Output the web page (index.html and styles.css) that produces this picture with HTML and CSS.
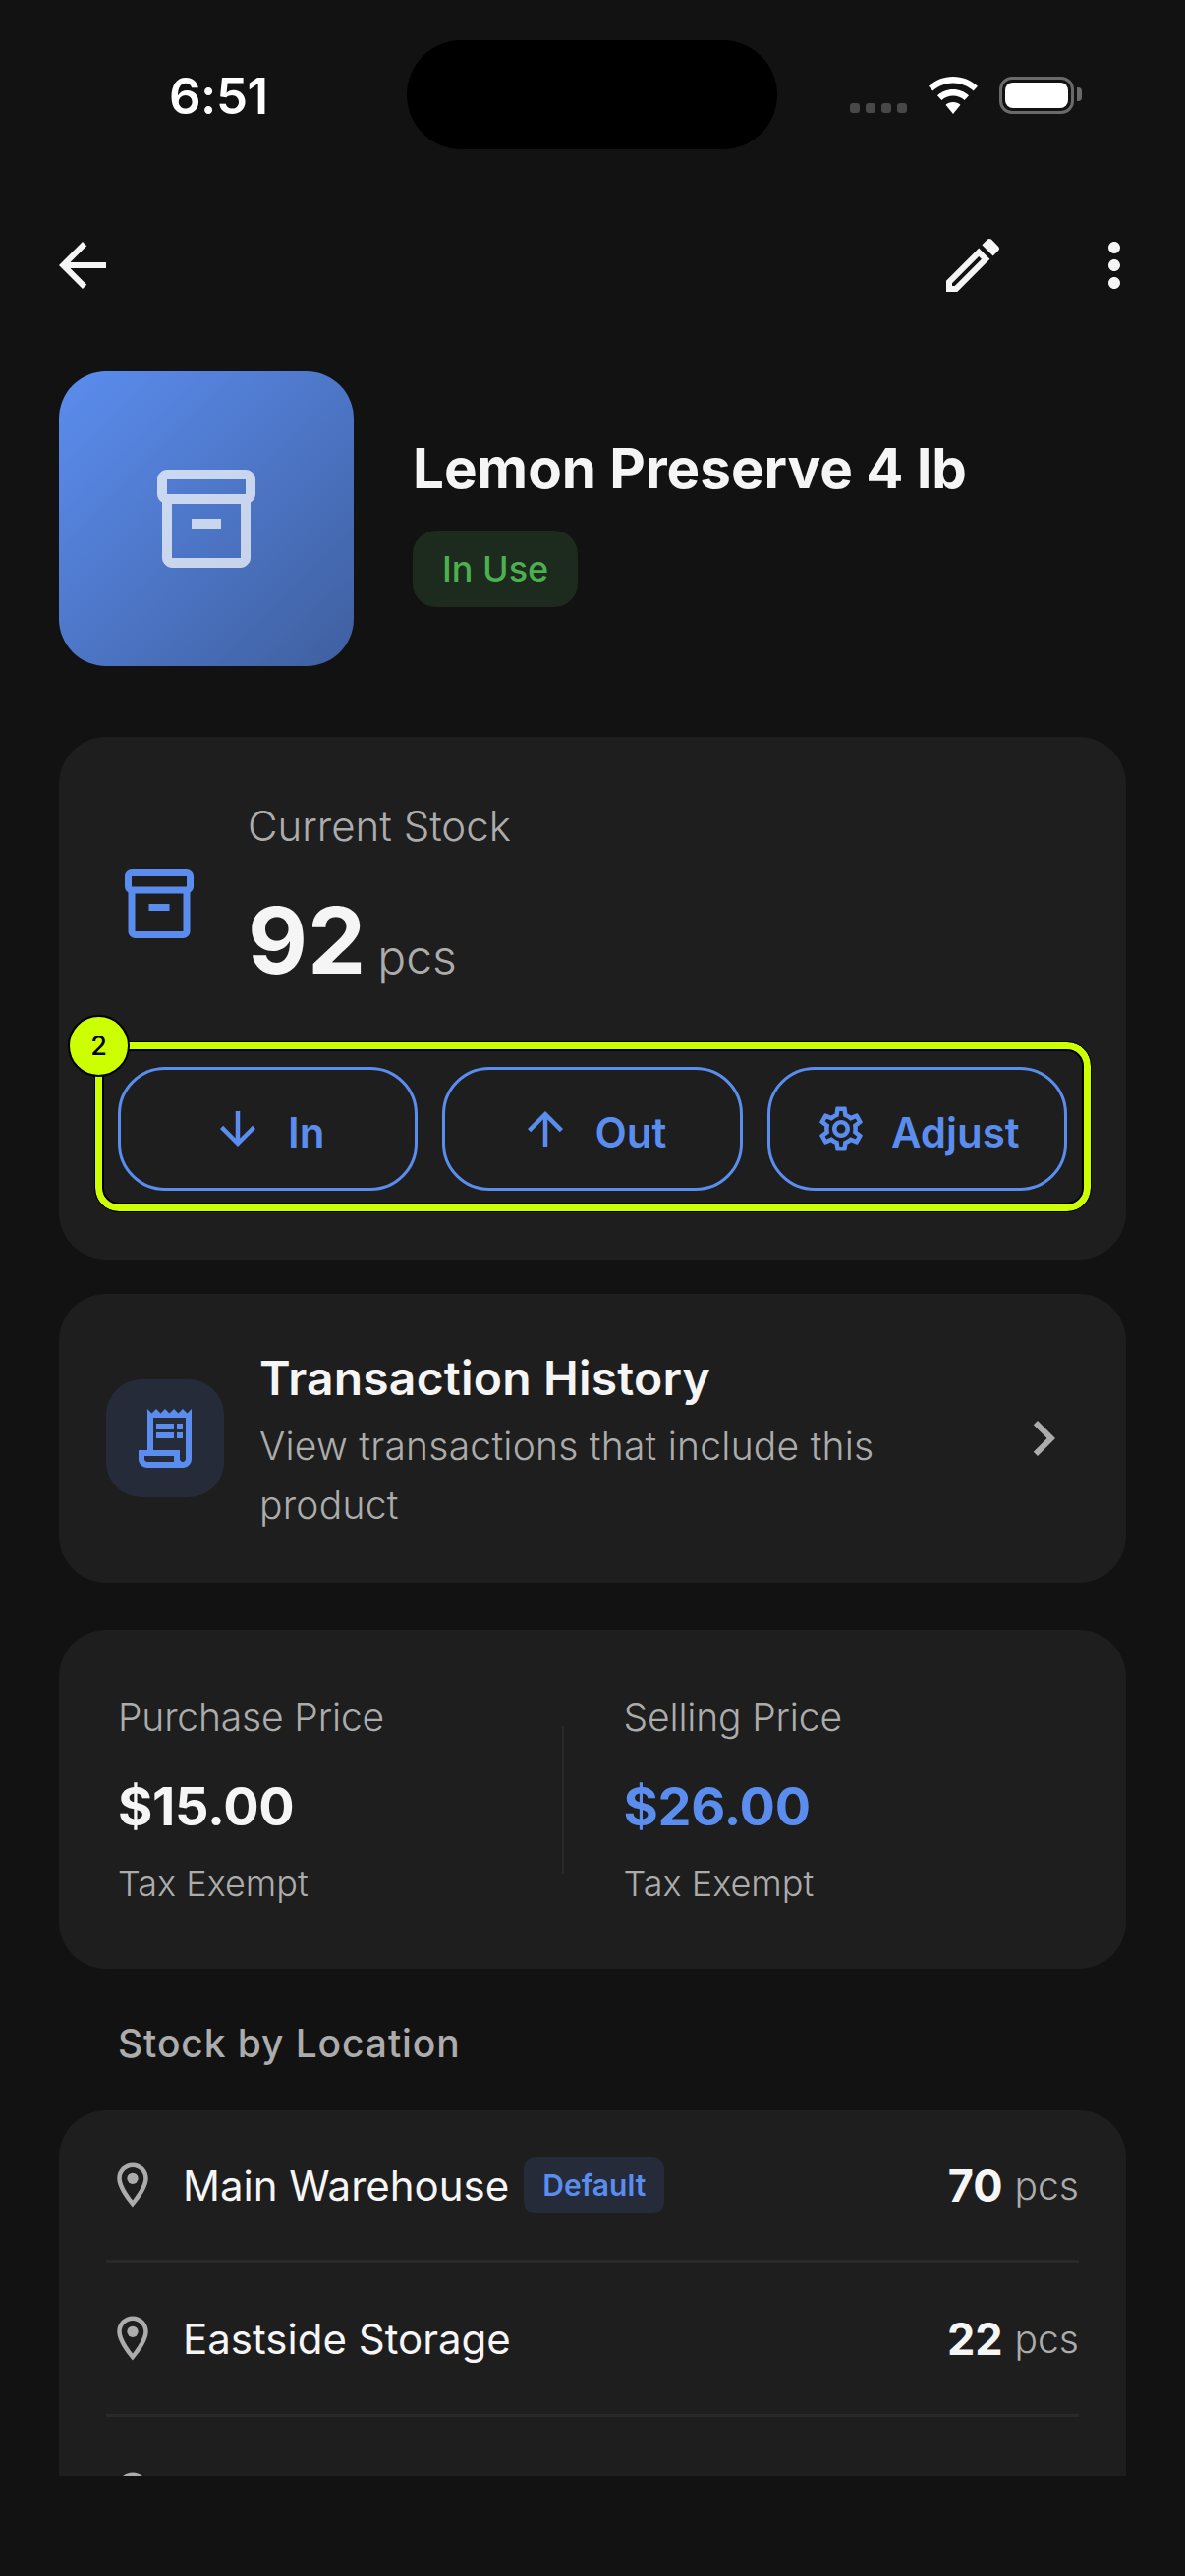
FILE: index.html
```html
<!DOCTYPE html>
<html lang="en">
	<head>
		<meta charset="UTF-8" />
		<meta name="viewport" content="width=device-width, initial-scale=1.0" />
		<title>Lemon Preserve 4 lb</title>
		<link rel="stylesheet" href="styles.css">
	</head>
	<body>
		<div class="app">
			<div class="status-bar">
				<span class="clock">6:51</span>
				<div class="island"></div>
				<div class="status-icons">
					<div class="signal"><i></i><i></i><i></i><i></i></div>
					<svg class="wifi" viewBox="0 0 50 38"><path fill="#fff" d="M25 0c9.600 0 18.400 3.700 25 9.800l-4.300 4.700C40.200 9.500 33 6.500 25 6.500S9.800 9.500 4.300 14.500L0 9.800C6.600 3.700 15.400 0 25 0zM25 13c6.200 0 11.800 2.400 16 6.200l-4.400 4.800C33.500 21.200 29.400 19.500 25 19.500s-8.500 1.700-11.600 4.500L9 19.200C13.200 15.400 18.800 13 25 13zM25 26c2.900 0 5.500 1 7.500 2.800L25 38l-7.500-9.200C19.500 27 22.100 26 25 26z"/></svg>
					<div class="battery"><div class="battery-fill"></div></div>
				</div>
			</div>

			<main class="content">
				<div class="toolbar">
					<svg class="icon-72" viewBox="0 0 24 24"><path d="M20 11H7.830l5.590-5.590L12 4l-8 8 8 8 1.410-1.410L7.830 13H20v-2z"/></svg>
					<div class="toolbar-right">
						<svg class="icon-72" viewBox="0 0 24 24"><path d="M14.060 9.020l.92.92L5.920 19H5v-.92l9.060-9.060M17.660 3c-.25 0-.51.1-.7.29l-1.830 1.830 3.750 3.750 1.830-1.830c.39-.39.39-1.020 0-1.410l-2.340-2.340c-.2-.2-.45-.29-.71-.29zm-3.600 3.190L3 17.250V21h3.750L17.810 9.940l-3.750-3.750z"/></svg>
						<svg class="icon-72" viewBox="0 0 24 24"><path d="M12 8c1.100 0 2-.9 2-2s-.9-2-2-2-2 .9-2 2 .9 2 2 2zm0 2c-1.100 0-2 .9-2 2s.9 2 2 2 2-.9 2-2-.9-2-2-2zm0 6c-1.100 0-2 .9-2 2s.9 2 2 2 2-.9 2-2-.9-2-2-2z"/></svg>
					</div>
				</div>

				<section class="product">
					<div class="product-tile">
						<svg class="tile-icon" viewBox="0 0 24 24"><path d="M20 2H4c-1 0-2 .9-2 2v3.010c0 .72.43 1.340 1 1.690V20c0 1.100 1.100 2 2 2h14c.9 0 2-.9 2-2V8.700c.57-.35 1-.97 1-1.690V4c0-1.100-1-2-2-2zm-1 18H5V9h14v11zm1-13H4V4h16v3z"/><path d="M9 12h6v2H9z"/></svg>
					</div>
					<div class="product-info">
						<h1>Lemon Preserve 4 lb</h1>
						<span class="chip">In Use</span>
					</div>
				</section>

				<section class="card stock-card">
					<div class="stock-head">
						<svg class="stock-icon" viewBox="0 0 24 24"><path d="M20 2H4c-1 0-2 .9-2 2v3.010c0 .72.43 1.340 1 1.690V20c0 1.100 1.100 2 2 2h14c.9 0 2-.9 2-2V8.700c.57-.35 1-.97 1-1.690V4c0-1.100-1-2-2-2zm-1 18H5V9h14v11zm1-13H4V4h16v3z"/><path d="M9 12h6v2H9z"/></svg>
						<div class="stock-text">
							<div class="stock-label">Current Stock</div>
							<div class="stock-value"><b>92</b><span>pcs</span></div>
						</div>
					</div>
					<div class="highlight">
						<span class="highlight-badge">2</span>
						<button class="action">
							<svg viewBox="0 0 24 24"><path d="M20 12l-1.410-1.410L13 16.170V4h-2v12.170l-5.580-5.590L4 12l8 8 8-8z"/></svg>
							<span class="action-label">In</span>
						</button>
						<button class="action">
							<svg viewBox="0 0 24 24"><path d="M4 12l1.410 1.410L11 7.830V20h2V7.830l5.580 5.590L20 12l-8-8-8 8z"/></svg>
							<span class="action-label">Out</span>
						</button>
						<button class="action">
							<svg viewBox="0 0 24 24"><path d="M19.430 12.980c.04-.32.07-.64.07-.98 0-.34-.03-.66-.07-.98l2.110-1.650c.19-.15.24-.42.12-.64l-2-3.460c-.09-.16-.26-.25-.44-.25-.06 0-.12.01-.17.03l-2.490 1c-.52-.4-1.080-.73-1.690-.98l-.38-2.650C14.460 2.180 14.250 2 14 2h-4c-.25 0-.46.18-.49.42l-.38 2.650c-.61.25-1.170.59-1.690.98l-2.490-1c-.06-.02-.12-.03-.18-.03-.17 0-.34.09-.43.25l-2 3.460c-.13.22-.07.49.12.64l2.110 1.650c-.04.32-.07.65-.07.98 0 .33.03.66.07.98l-2.110 1.650c-.19.15-.24.42-.12.64l2 3.460c.09.16.26.25.44.25.06 0 .12-.01.17-.03l2.490-1c.52.4 1.080.73 1.690.98l.38 2.650c.03.24.24.42.49.42h4c.25 0 .46-.18.49-.42l.38-2.650c.61-.25 1.170-.59 1.690-.98l2.490 1c.06.02.12.03.18.03.17 0 .34-.09.43-.25l2-3.460c.12-.22.07-.49-.12-.64l-2.110-1.650zm-1.980-1.710c.04.31.05.52.05.73 0 .21-.02.43-.05.73l-.14 1.130.89.7 1.080.84-.7 1.210-1.270-.51-1.040-.42-.9.68c-.43.32-.84.56-1.250.73l-1.060.43-.16 1.130-.2 1.350h-1.400l-.19-1.350-.16-1.130-1.060-.43c-.43-.18-.83-.41-1.230-.71l-.91-.7-1.060.43-1.270.51-.7-1.210 1.080-.84.89-.7-.14-1.130c-.03-.31-.05-.54-.05-.74s.02-.43.05-.73l.14-1.130-.89-.7-1.080-.84.7-1.210 1.270.51 1.040.42.9-.68c.43-.32.84-.56 1.250-.73l1.060-.43.16-1.130.2-1.350h1.390l.19 1.350.16 1.130 1.060.43c.43.18.83.41 1.230.71l.91.7 1.060-.43 1.270-.51.7 1.210-1.070.85-.89.7.14 1.130zM12 8c-2.210 0-4 1.790-4 4s1.790 4 4 4 4-1.790 4-4-1.790-4-4-4zm0 6c-1.100 0-2-.9-2-2s.9-2 2-2 2 .9 2 2-.9 2-2 2z"/></svg>
							<span class="action-label">Adjust</span>
						</button>
					</div>
				</section>

				<section class="card history-card">
					<div class="history-icon">
						<svg viewBox="0 0 24 24"><path d="M19.500 3.500 18 2l-1.500 1.500L15 2l-1.500 1.500L12 2l-1.500 1.500L9 2 7.500 3.500 6 2v14H3v3c0 1.660 1.340 3 3 3h12c1.660 0 3-1.340 3-3V2l-1.500 1.500zM15 20H6c-.55 0-1-.45-1-1v-1h10v2zm4-1c0 .55-.45 1-1 1s-1-.45-1-1v-3H8V5h11v14z"/><path d="M9 7h6v2H9zM16 7h2v2h-2zM9 10h6v2H9zM16 10h2v2h-2z"/></svg>
					</div>
					<div class="history-text">
						<h2>Transaction History</h2>
						<p>View transactions that include this product</p>
					</div>
					<svg class="chevron" viewBox="0 0 24 24"><path d="M10 6L8.590 7.410 13.170 12l-4.580 4.590L10 18l6-6z"/></svg>
				</section>

				<section class="card price-card">
					<div class="price-col">
						<div class="price-label">Purchase Price</div>
						<div class="price-value">$15.00</div>
						<div class="price-note">Tax Exempt</div>
					</div>
					<div class="price-divider"></div>
					<div class="price-col">
						<div class="price-label">Selling Price</div>
						<div class="price-value price-value-accent">$26.00</div>
						<div class="price-note">Tax Exempt</div>
					</div>
				</section>

				<h3 class="section-title">Stock by Location</h3>

				<section class="card location-card">
					<div class="location-row">
						<svg class="pin" viewBox="0 0 24 24"><path d="M12 2C8.130 2 5 5.130 5 9c0 5.250 7 13 7 13s7-7.750 7-13c0-3.870-3.130-7-7-7zM7 9c0-2.760 2.240-5 5-5s5 2.240 5 5c0 2.880-2.880 7.190-5 9.880C9.920 16.210 7 11.850 7 9z"/><circle cx="12" cy="9" r="2.500"/></svg>
						<span class="location-name">Main Warehouse</span>
						<span class="default-tag">Default</span>
						<span class="location-qty"><b>70</b><span>pcs</span></span>
					</div>
					<div class="location-row">
						<svg class="pin" viewBox="0 0 24 24"><path d="M12 2C8.130 2 5 5.130 5 9c0 5.250 7 13 7 13s7-7.750 7-13c0-3.870-3.130-7-7-7zM7 9c0-2.760 2.240-5 5-5s5 2.240 5 5c0 2.880-2.880 7.190-5 9.880C9.920 16.210 7 11.850 7 9z"/><circle cx="12" cy="9" r="2.500"/></svg>
						<span class="location-name">Eastside Storage</span>
						<span class="location-qty"><b>22</b><span>pcs</span></span>
					</div>
					<div class="location-row">
						<svg class="pin" viewBox="0 0 24 24"><path d="M12 2C8.130 2 5 5.130 5 9c0 5.250 7 13 7 13s7-7.750 7-13c0-3.870-3.130-7-7-7zM7 9c0-2.760 2.240-5 5-5s5 2.240 5 5c0 2.880-2.880 7.190-5 9.880C9.920 16.210 7 11.850 7 9z"/><circle cx="12" cy="9" r="2.500"/></svg>
					</div>
				</section>
			</main>
		</div>
	</body>
</html>
```

FILE: styles.css
```css
:root {
	--bg-color: #121212;
	--card-bg: #1e1e1e;
	--text-color: #f5f5f5;
	--muted-color: #acacac;
	--primary-color: #5b8def;
	--tint-bg: #252b38;
	--line-color: #292929;
	--lime: #ccff00;
}

* {
	box-sizing: border-box;
}

body {
	margin: 0;
	background-color: var(--bg-color);
	color: var(--text-color);
	font-family: 'Inter', sans-serif;
}

.app {
	position: relative;
	display: flex;
	flex-direction: column;
	height: 2622px;
	padding-bottom: 102px;
	overflow: hidden;
}

/* Status bar */
.status-bar {
	flex: 0 0 192px;
	display: flex;
	justify-content: space-between;
	align-items: flex-start;
	padding: 67px 113px 0 172px;
}

.clock {
	font-size: 51px;
	line-height: 62px;
	font-weight: 600;
	letter-spacing: -0.5px;
	color: #fff;
}

.island {
	position: absolute;
	left: 414px;
	top: 41px;
	width: 377px;
	height: 111px;
	border-radius: 56px;
	background-color: #000;
}

.status-icons {
	display: flex;
	align-items: flex-end;
	gap: 22px;
	padding-top: 11px;
}

.signal {
	display: flex;
	gap: 6px;
	padding-bottom: 1px;
}

.signal i {
	width: 10px;
	height: 10px;
	border-radius: 3px;
	background-color: #484848;
}

.wifi {
	display: block;
	width: 50px;
	height: 38px;
}

.battery {
	position: relative;
	width: 76px;
	height: 38px;
	padding: 3px;
	border: 3px solid #6a6a6a;
	border-radius: 13px;
}

.battery::after {
	content: "";
	position: absolute;
	right: -11px;
	top: 8px;
	width: 5px;
	height: 14px;
	border-radius: 0 4px 4px 0;
	background-color: #6a6a6a;
}

.battery-fill {
	height: 100%;
	border-radius: 8px;
	background-color: #fff;
}

/* Toolbar */
.content {
	flex: 1;
	min-height: 0;
	overflow: hidden;
	padding: 0 60px;
}

.toolbar {
	display: flex;
	justify-content: space-between;
	align-items: center;
	height: 72px;
	margin: 42px -24px 72px -12px;
}

.toolbar-right {
	display: flex;
	gap: 72px;
}

.icon-72 {
	display: block;
	width: 72px;
	height: 72px;
	fill: #f5f5f5;
}

/* Product */
.product {
	display: flex;
	align-items: center;
	gap: 60px;
	margin-bottom: 72px;
}

.product-tile {
	flex: 0 0 300px;
	height: 300px;
	display: flex;
	justify-content: center;
	align-items: center;
	border-radius: 48px;
	background: linear-gradient(135deg, #5b8def, #3f5f9f);
}

.tile-icon {
	width: 120px;
	height: 120px;
	fill: rgba(255, 255, 255, 0.7);
}

.product-info {
	padding-top: 2px;
}

.product-info h1 {
	margin: 0 0 27px 0;
	font-size: 56.5px;
	line-height: 72px;
	font-weight: 700;
}

.chip {
	display: inline-block;
	padding: 0 30px;
	height: 78px;
	line-height: 78px;
	border-radius: 24px;
	background-color: #1d2a1e;
	color: #4caf50;
	font-size: 36px;
	font-weight: 500;
}

/* Cards */
.card {
	border-radius: 48px;
	background-color: var(--card-bg);
}

.stock-card {
	height: 532px;
	padding: 60px;
	margin-bottom: 35px;
}

.stock-head {
	display: flex;
	align-items: center;
	gap: 48px;
	height: 220px;
}

.stock-icon {
	flex: 0 0 84px;
	height: 84px;
	fill: var(--primary-color);
}

.stock-text {
	padding-top: 14px;
}

.stock-label {
	font-size: 42px;
	line-height: 60px;
	color: var(--muted-color);
	font-weight: 300;
}

.stock-value {
	margin-top: 28px;
	line-height: 116px;
}

.stock-value b {
	font-size: 94px;
	font-weight: 700;
}

.stock-value span {
	margin-left: 12px;
	font-size: 48px;
	font-weight: 300;
	color: var(--muted-color);
}

/* Highlight box round the stock buttons */
.highlight {
	position: relative;
	display: flex;
	gap: 25px;
	margin: 31px -24px 0 -23px;
	padding: 18px 17px 14px 16px;
	border: 7px solid var(--lime);
	border-radius: 24px;
	outline: 1px solid #000;
	box-shadow: inset 0 0 0 2px #000;
}

.highlight-badge {
	position: absolute;
	left: -35px;
	top: -35px;
	width: 63px;
	height: 63px;
	border-radius: 50%;
	border: 2px solid #000;
	background-color: var(--lime);
	color: #000;
	font-size: 27px;
	font-weight: 500;
	line-height: 59px;
	text-align: center;
}

.action {
	flex: 1;
	height: 126px;
	display: flex;
	justify-content: center;
	align-items: center;
	gap: 24px;
	padding: 0;
	border: 3px solid var(--primary-color);
	border-radius: 48px;
	background: none;
	color: var(--primary-color);
	font-family: inherit;
	font-size: 42px;
	font-weight: 600;
}

.action svg {
	width: 54px;
	height: 54px;
	fill: var(--primary-color);
}

.action-label {
	padding-top: 6px;
}

/* Transaction history */
.history-card {
	display: flex;
	align-items: center;
	gap: 36px;
	height: 294px;
	padding: 0 48px;
	margin-bottom: 48px;
}

.history-icon {
	flex: 0 0 120px;
	height: 120px;
	display: flex;
	justify-content: center;
	align-items: center;
	border-radius: 36px;
	background-color: var(--tint-bg);
}

.history-icon svg {
	width: 72px;
	height: 72px;
	fill: var(--primary-color);
}

.history-text {
	flex: 1;
	padding-top: 6px;
}

.history-text h2 {
	margin: 0;
	font-size: 48px;
	line-height: 60px;
	font-weight: 600;
	letter-spacing: 0.2px;
}

.history-text p {
	margin: 9px 0 0 0;
	font-size: 39px;
	line-height: 60px;
	font-weight: 300;
	letter-spacing: 0.25px;
	color: var(--muted-color);
}

.chevron {
	flex: 0 0 72px;
	height: 72px;
	fill: var(--muted-color);
}

/* Prices */
.price-card {
	display: flex;
	height: 345px;
	padding: 60px;
	margin-bottom: 52px;
}

.price-col {
	flex: 1;
}

.price-divider {
	flex: 0 0 2px;
	align-self: center;
	height: 150px;
	margin-right: 61px;
	background-color: var(--line-color);
}

.price-label {
	font-size: 39px;
	line-height: 58px;
	font-weight: 300;
	letter-spacing: -0.15px;
	color: var(--muted-color);
}

.price-value {
	margin: 30px 0 19px 0;
	font-size: 54px;
	line-height: 64px;
	font-weight: 700;
	letter-spacing: -0.3px;
}

.price-value-accent {
	color: var(--primary-color);
}

.price-note {
	font-size: 36px;
	line-height: 54px;
	font-weight: 300;
	color: var(--muted-color);
}

/* Locations */
.section-title {
	margin: 0 0 44px 60px;
	font-size: 39px;
	line-height: 48px;
	font-weight: 500;
	letter-spacing: 0.9px;
	color: var(--muted-color);
}

.location-card {
	padding: 0 48px;
}

.location-row {
	display: flex;
	align-items: center;
	height: 157px;
	border-bottom: 3px solid var(--line-color);
}

.location-row:first-child {
	height: 155px;
}

.location-row:last-child {
	border-bottom: none;
}

.pin {
	flex: 0 0 54px;
	height: 54px;
	margin-right: 24px;
	fill: var(--muted-color);
}

.location-name {
	font-size: 42px;
	font-weight: 400;
}

.default-tag {
	margin-left: 15px;
	height: 57px;
	padding: 0 19px;
	line-height: 57px;
	border-radius: 12px;
	background-color: var(--tint-bg);
	color: var(--primary-color);
	font-size: 30px;
	font-weight: 600;
}

.location-qty {
	display: flex;
	align-items: center;
	gap: 12px;
	margin-left: auto;
	font-size: 45px;
}

.location-qty b {
	font-weight: 700;
}

.location-qty span {
	font-size: 39px;
	font-weight: 300;
	color: var(--muted-color);
}
```
